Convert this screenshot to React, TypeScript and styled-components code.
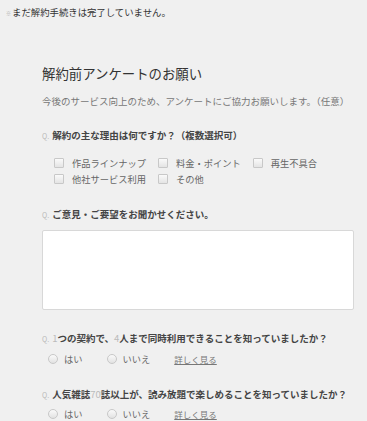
import React from 'react'
import styled, { createGlobalStyle } from 'styled-components'

const GlobalStyle = createGlobalStyle`
  html, body {
    margin: 0;
    padding: 0;
    background: #f0f0f0;
  }
  body {
    font-family: "Noto Sans CJK JP", "Noto Sans", sans-serif;
    color: #333;
  }
`

const reasons = ['作品ラインナップ', '料金・ポイント', '再生不具合', '他社サービス利用', 'その他']

const App: React.FC = () => {
  return (
    <Page>
      <GlobalStyle />
      <Notice>
        <span className='mark'>※</span>まだ解約手続きは完了していません。
      </Notice>
      <Survey>
        <Title>解約前アンケートのお願い</Title>
        <Lead>今後のサービス向上のため、アンケートにご協力お願いします。（任意）</Lead>

        <Question gap={20}>
          <QMark>Q.</QMark>解約の主な理由は何ですか？（複数選択可）
        </Question>
        <CheckList>
          {reasons.map((r) => (
            <CheckItem key={r}>
              <CheckBox />
              {r}
            </CheckItem>
          ))}
        </CheckList>

        <Question gap={20}>
          <QMark>Q.</QMark>ご意見・ご要望をお聞かせください。
        </Question>
        <TextArea />

        <Question gap={21}>
          <QMark>Q.</QMark><Num>1</Num>つの契約で、<Num>4</Num>人まで同時利用できることを知っていましたか？
        </Question>
        <RadioRow gap={6}>
          <RadioItem><Radio />はい</RadioItem>
          <RadioItem><Radio />いいえ</RadioItem>
          <MoreLink>詳しく見る</MoreLink>
        </RadioRow>

        <Question gap={21}>
          <QMark>Q.</QMark>人気雑誌<Num>70</Num>誌以上が、読み放題で楽しめることを知っていましたか？
        </Question>
        <RadioRow gap={5}>
          <RadioItem><Radio />はい</RadioItem>
          <RadioItem><Radio />いいえ</RadioItem>
          <MoreLink>詳しく見る</MoreLink>
        </RadioRow>
      </Survey>
    </Page>
  )
}

const Page = styled.div`
  width: 367px;
  min-height: 421px;
  overflow: hidden;
`

const Notice = styled.div`
  padding: 5px 6px 0;
  font-size: 9.4px;
  line-height: 14px;
  color: #333;
  .mark {
    font-size: 5px;
    color: #aaa;
    margin-right: 1px;
    vertical-align: 1px;
  }
`

const Survey = styled.div`
  padding: 0 13px 0 42px;
`

const Title = styled.div`
  margin-top: 44px;
  font-size: 13.4px;
  line-height: 18px;
  color: #333;
`

const Lead = styled.div`
  margin-top: 12px;
  font-size: 9.5px;
  line-height: 14px;
  color: #777;
  white-space: nowrap;
`

const Question = styled.div<{ gap: number }>`
  margin-top: ${(p) => p.gap}px;
  font-size: 9.5px;
  line-height: 14px;
  font-weight: 700;
  color: #444;
  white-space: nowrap;
`

const QMark = styled.span`
  font-size: 7px;
  font-weight: 400;
  color: #bbb;
  margin-right: 3px;
`

const Num = styled.span`
  font-weight: 400;
  color: #bbb;
`

const CheckList = styled.div`
  margin-top: 12px;
  padding-left: 12px;
  display: flex;
  flex-wrap: wrap;
  column-gap: 12px;
`

const CheckItem = styled.label`
  display: flex;
  align-items: center;
  gap: 8px;
  font-size: 9.25px;
  line-height: 16px;
  color: #666;
`

const CheckBox = styled.span`
  width: 8px;
  height: 8px;
  border: 1px solid #c8c8c8;
  border-radius: 1px;
  background: linear-gradient(#fafafa, #e4e4e4);
`

const TextArea = styled.div`
  margin-top: 8px;
  height: 78px;
  background: #fff;
  border: 1px solid #d8d8d8;
  border-radius: 2px;
`

const RadioRow = styled.div<{ gap: number }>`
  margin-top: ${(p) => p.gap}px;
  padding-left: 6px;
  display: flex;
  align-items: center;
  gap: 24px;
  font-size: 9.25px;
  line-height: 14px;
`

const RadioItem = styled.label`
  display: flex;
  align-items: center;
  gap: 6px;
  color: #666;
`

const Radio = styled.span`
  width: 8px;
  height: 8px;
  border: 1px solid #c8c8c8;
  border-radius: 50%;
  background: linear-gradient(#fafafa, #e2e2e2);
`

const MoreLink = styled.a`
  color: #777;
  text-decoration: underline;
  font-size: 8.5px;
`

export default App
